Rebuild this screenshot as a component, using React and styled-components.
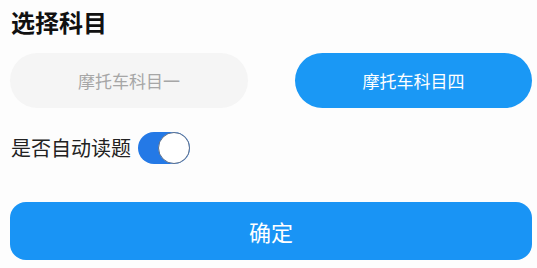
import React, { useState } from 'react';
import styled, { createGlobalStyle } from 'styled-components';

const GlobalStyle = createGlobalStyle`
  html, body {
    margin: 0;
    padding: 0;
    background: #fdfdfd;
    font-family: "Noto Sans CJK SC", "Noto Sans", sans-serif;
  }
`;

const Page = styled.div`
  width: 537px;
  height: 268px;
  box-sizing: border-box;
  padding: 10px 5px 0 10px;
  display: flex;
  flex-direction: column;
`;

const Title = styled.h1`
  margin: 0 0 0 1px;
  font-size: 24px;
  line-height: 24px;
  font-weight: 700;
  color: #111;
`;

const Options = styled.div`
  margin-top: 19px;
  display: grid;
  grid-template-columns: 238px 237px;
  column-gap: 47px;
`;

const Option = styled.button`
  height: 55px;
  border: none;
  border-radius: 28px;
  font-family: inherit;
  font-size: 17px;
  cursor: pointer;
  background: ${(p) => (p.$active ? '#1a98f5' : '#f5f5f5')};
  color: ${(p) => (p.$active ? '#fff' : '#a6a6a6')};
`;

const Row = styled.div`
  margin-top: 24px;
  padding-left: 1px;
  display: flex;
  align-items: center;
  gap: 7px;
  height: 32px;
`;

const Label = styled.span`
  font-size: 20px;
  color: #222;
  line-height: 1;
`;

const Track = styled.button`
  position: relative;
  width: 52px;
  height: 32px;
  padding: 0;
  border: none;
  border-radius: 16px;
  background: ${(p) => (p.$on ? '#2479e6' : '#ddd')};
  cursor: pointer;
`;

const Knob = styled.span`
  position: absolute;
  top: 0;
  left: ${(p) => (p.$on ? '20px' : '0')};
  width: 32px;
  height: 32px;
  box-sizing: border-box;
  border-radius: 50%;
  background: #fff;
  border: 1.5px solid #5b6f8c;
`;

const Confirm = styled.button`
  margin-top: 38px;
  height: 58px;
  border: none;
  border-radius: 16px;
  background: #1994f5;
  color: #fff;
  font-family: inherit;
  font-size: 22px;
  cursor: pointer;
`;

export default function App() {
  const [subject, setSubject] = useState(4);
  const [autoRead, setAutoRead] = useState(true);

  return (
    <>
      <GlobalStyle />
      <Page>
        <Title>选择科目</Title>
        <Options>
          <Option $active={subject === 1} onClick={() => setSubject(1)}>
            摩托车科目一
          </Option>
          <Option $active={subject === 4} onClick={() => setSubject(4)}>
            摩托车科目四
          </Option>
        </Options>
        <Row>
          <Label>是否自动读题</Label>
          <Track $on={autoRead} onClick={() => setAutoRead(!autoRead)}>
            <Knob $on={autoRead} />
          </Track>
        </Row>
        <Confirm>确定</Confirm>
      </Page>
    </>
  );
}
